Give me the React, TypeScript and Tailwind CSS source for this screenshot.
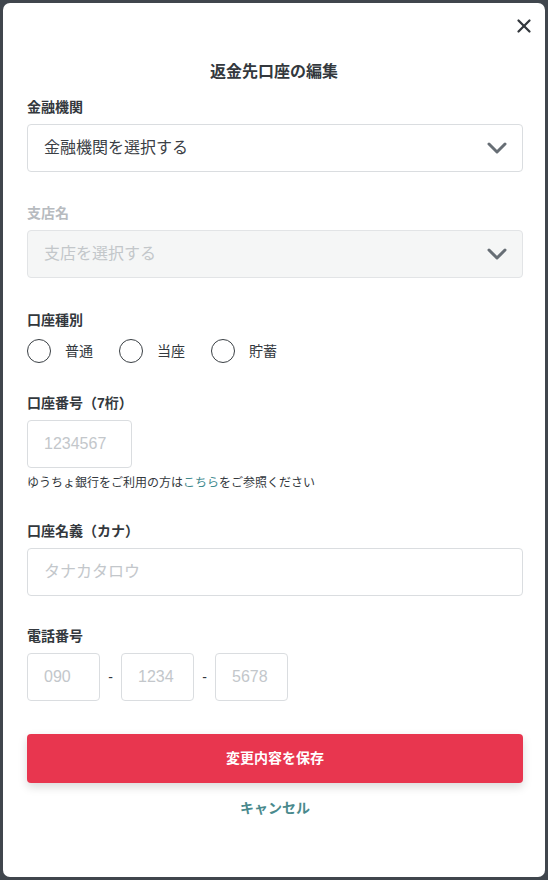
import { X } from "lucide-react";

function Label({ children, muted }: { children: React.ReactNode; muted?: boolean }) {
  return (
    <div
      className={`text-[14px] leading-[20px] font-bold mb-[7px] ${
        muted ? "text-[#b7bbbf]" : "text-[#33383d]"
      }`}
    >
      {children}
    </div>
  );
}

function Chevron() {
  return (
    <svg width="20" height="12" viewBox="0 0 20 12" fill="none">
      <path
        d="M2 2l8 8 8-8"
        stroke="#676e75"
        strokeWidth="3"
        strokeLinecap="round"
        strokeLinejoin="round"
      />
    </svg>
  );
}

function SelectBox({ text, disabled }: { text: string; disabled?: boolean }) {
  return (
    <div
      className={`h-[48px] rounded-[4px] border flex items-center justify-between pl-4 pr-[15px] ${
        disabled
          ? "bg-[#f5f6f6] border-[#e2e4e6] text-[#c3c7ca]"
          : "bg-white border-[#dadde0] text-[#3b4045]"
      }`}
    >
      <span className="text-[16px]">{text}</span>
      <Chevron />
    </div>
  );
}

function TextInput({ placeholder, className }: { placeholder: string; className: string }) {
  return (
    <input
      placeholder={placeholder}
      className={`h-[48px] rounded-[4px] border border-[#dadde0] px-4 text-[16px] text-[#33383d] placeholder:text-[#c3c7cb] outline-none ${className}`}
    />
  );
}

function Radio({ label }: { label: string }) {
  return (
    <label className="flex items-center gap-[14px]">
      <span className="w-[24px] h-[24px] rounded-full border border-[#3a3f44] bg-white" />
      <span className="text-[14px] text-[#33383d]">{label}</span>
    </label>
  );
}

export default function App() {
  return (
    <div className="w-[548px] h-[880px] bg-[#40464d] p-[3px] font-['Liberation_Sans','Noto_Sans_CJK_JP',sans-serif]">
      <div className="h-[874px] bg-white rounded-[7px] flex flex-col">
        {/* Close */}
        <div className="flex justify-end pt-[11px] pr-[9px]">
          <button className="w-[24px] h-[24px] flex items-center justify-center text-[#33383d]">
            <X size={22} strokeWidth={2.5} />
          </button>
        </div>

        <h1 className="mt-[22px] text-center text-[16px] leading-[24px] font-bold text-[#33383d]">
          返金先口座の編集
        </h1>

        <div className="pl-6 pr-[22px]">
          {/* Bank */}
          <div className="mt-[13px]">
            <Label>金融機関</Label>
            <SelectBox text="金融機関を選択する" />
          </div>

          {/* Branch */}
          <div className="mt-[31px]">
            <Label muted>支店名</Label>
            <SelectBox text="支店を選択する" disabled />
          </div>

          {/* Account type */}
          <div className="mt-[32px]">
            <div className="text-[14px] leading-[20px] font-bold text-[#33383d] mb-[9px]">口座種別</div>
            <div className="flex items-center gap-[26px]">
              <Radio label="普通" />
              <Radio label="当座" />
              <Radio label="貯蓄" />
            </div>
          </div>

          {/* Account number */}
          <div className="mt-[30px]">
            <Label>口座番号（7桁）</Label>
            <TextInput placeholder="1234567" className="w-[105px]" />
            <p className="mt-[6px] text-[12px] leading-[18px] text-[#33383d]">
              ゆうちょ銀行をご利用の方は
              <a className="text-[#3f8a8e]">こちら</a>
              をご参照ください
            </p>
          </div>

          {/* Account holder */}
          <div className="mt-[29px]">
            <Label>口座名義（カナ）</Label>
            <TextInput placeholder="タナカタロウ" className="w-full" />
          </div>

          {/* Phone */}
          <div className="mt-[30px]">
            <Label>電話番号</Label>
            <div className="flex items-center">
              <TextInput placeholder="090" className="w-[73px]" />
              <span className="w-[21px] text-center text-[14px] text-[#33383d]">-</span>
              <TextInput placeholder="1234" className="w-[73px]" />
              <span className="w-[21px] text-center text-[14px] text-[#33383d]">-</span>
              <TextInput placeholder="5678" className="w-[73px]" />
            </div>
          </div>

          <button className="mt-[33px] w-full h-[49px] rounded-[4px] bg-[#e8364f] text-white text-[14px] font-bold shadow-[0_4px_10px_rgba(0,0,0,0.15)]">
            変更内容を保存
          </button>

          <div className="mt-[13px] text-center">
            <button className="text-[14px] leading-[20px] font-bold text-[#4a8a8d]">キャンセル</button>
          </div>
        </div>
      </div>
    </div>
  );
}
